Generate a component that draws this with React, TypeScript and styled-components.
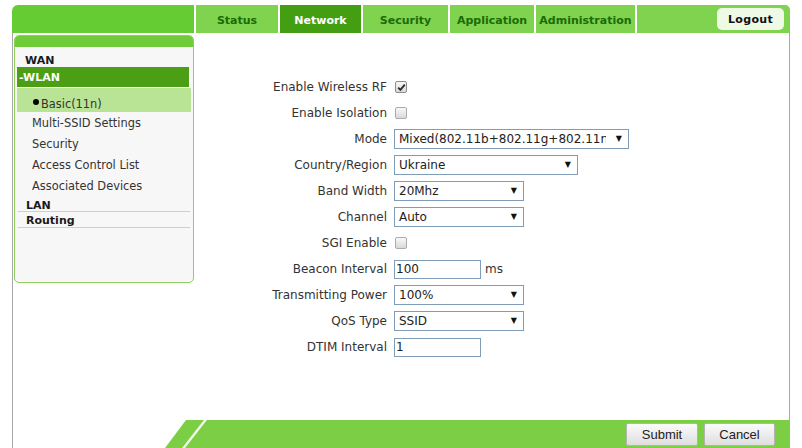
import React from 'react';
import styled, { createGlobalStyle } from 'styled-components';

const GlobalStyle = createGlobalStyle`
  html, body {
    margin: 0;
    padding: 0;
    background: #fff;
    font-family: 'DejaVu Sans', Verdana, sans-serif;
  }
  * {
    box-sizing: border-box;
  }
`;

const Page = styled.div`
  width: 778px;
  margin-left: 12px;
  padding-top: 5px;
`;

const Header = styled.div`
  display: flex;
  gap: 2px;
  height: 28px;
`;

const HeaderLead = styled.div`
  width: 182px;
  background: #66cc33;
  border-top-left-radius: 6px;
`;

const Tab = styled.div<{ $w: number; $active?: boolean }>`
  width: ${(p) => p.$w}px;
  display: flex;
  align-items: center;
  justify-content: center;
  padding-top: 2px;
  background: ${(p) => (p.$active ? '#449e12' : '#7fd34e')};
  color: ${(p) => (p.$active ? '#fff' : '#1c6a06')};
  font-size: 11px;
  font-weight: bold;
`;

const HeaderTail = styled.div`
  flex: 1;
  display: flex;
  align-items: center;
  justify-content: flex-end;
  padding-right: 6px;
  background: #7fd34e;
  border-top-right-radius: 5px;
`;

const LogoutButton = styled.div`
  width: 67px;
  height: 22px;
  display: flex;
  align-items: center;
  justify-content: center;
  background: #eef9e6;
  border-radius: 5px;
  font-size: 11px;
  font-weight: bold;
  color: #111;
  letter-spacing: 0.3px;
`;

const Panel = styled.div`
  height: 415px;
  display: flex;
  flex-direction: column;
  border-left: 1px solid #a9a9a9;
  border-right: 1px solid #a9a9a9;
`;

const Main = styled.div`
  flex: 1;
  display: flex;
  padding: 2px 0 0 1px;
`;

const Sidebar = styled.div`
  width: 180px;
  height: 248px;
  background: #f7f7f7;
  border: 1px solid #8ed05e;
  border-radius: 5px;
  overflow: hidden;
`;

const SidebarCap = styled.div`
  height: 11px;
  background: #6fcc38;
`;

const NavList = styled.div`
  display: flex;
  flex-direction: column;
  padding: 0 2px;
`;

const NavGroup = styled.div<{ $h: number; $line?: boolean; $pt?: number }>`
  height: ${(p) => p.$h}px;
  padding: ${(p) => p.$pt ?? 0}px 0 0 8px;
  margin: 0 ${(p) => (p.$line ? 1 : 0)}px;
  font-size: 11px;
  font-weight: bold;
  color: #1a1a1a;
  line-height: 15px;
  border-bottom: ${(p) => (p.$line ? '1px solid #cfcfcf' : 'none')};
`;

const NavOpen = styled.div`
  height: 20px;
  display: flex;
  align-items: center;
  padding-left: 2px;
  margin-right: 2px;
  background: #4c9e14;
  color: #fff;
  font-size: 11px;
  font-weight: bold;
`;

const NavItem = styled.div<{ $current?: boolean }>`
  height: ${(p) => (p.$current ? 24 : 21)}px;
  display: flex;
  align-items: center;
  padding: ${(p) => (p.$current ? '8px 0 0 16px' : '0 0 0 15px')};
  margin-top: ${(p) => (p.$current ? 1 : 0)}px;
  background: ${(p) => (p.$current ? '#b9e496' : 'transparent')};
  color: #333;
  font-size: 11.4px;
`;

const Bullet = styled.span`
  display: inline-block;
  width: 6px;
  height: 6px;
  margin: 0 2px 4px 0;
  border-radius: 50%;
  background: #000;
`;

const Form = styled.div`
  flex: 1;
  padding-top: 39px;
  display: grid;
  grid-template-columns: 193px 1fr;
  grid-auto-rows: 26px;
  column-gap: 7px;
  align-items: center;
  align-content: start;
`;

const Label = styled.div`
  text-align: right;
  font-size: 12px;
  color: #333;
`;

const Field = styled.div`
  display: flex;
  align-items: center;
  gap: 4px;
  font-size: 12px;
  color: #333;
`;

const Check = styled.span<{ $on?: boolean }>`
  width: 12px;
  height: 12px;
  margin-left: 1px;
  display: inline-flex;
  align-items: center;
  justify-content: center;
  border: 1px solid ${(p) => (p.$on ? '#8c8c8c' : '#ababab')};
  border-radius: 2px;
  background: linear-gradient(#f8f8f8, #d9d9d9);
`;

const SelectWrap = styled.div<{ $w: number }>`
  position: relative;
  width: ${(p) => p.$w}px;
  height: 20px;
  &::after {
    content: '▼';
    position: absolute;
    right: 7px;
    top: 5px;
    font-size: 8px;
    color: #111;
    pointer-events: none;
  }
`;

const Select = styled.select`
  appearance: none;
  width: 100%;
  height: 100%;
  margin: 0;
  padding: 0 22px 0 4px;
  border: 1px solid #7f9db9;
  border-radius: 0;
  background: #fff;
  font-family: 'DejaVu Sans', Verdana, sans-serif;
  font-size: 12px;
  color: #222;
  outline: none;
`;

const TextInput = styled.input`
  width: 87px;
  height: 19px;
  margin: 0;
  padding: 0 1px;
  border: 1px solid #7f9db9;
  font-family: 'DejaVu Sans', Verdana, sans-serif;
  font-size: 12px;
  color: #222;
  outline: none;
`;

const Footer = styled.div`
  position: relative;
  height: 28px;
  margin-left: 152px;
  display: flex;
  align-items: center;
  justify-content: flex-end;
  gap: 6px;
  padding-right: 14px;
  background: #7ccf45;
  clip-path: polygon(0 100%, 21px 0, 100% 0, 100% 100%);
  &::before {
    content: '';
    position: absolute;
    top: 0;
    bottom: 0;
    left: 28px;
    width: 3px;
    background: #f2fbe9;
    transform: skewX(-38deg);
  }
`;

const Button = styled.button<{ $w: number }>`
  width: ${(p) => p.$w}px;
  height: 23px;
  border: 1px solid #b3b3b3;
  border-radius: 2px;
  background: linear-gradient(#fbfbfb, #dedede);
  font-family: 'Liberation Sans', Arial, sans-serif;
  font-size: 13px;
  color: #222;
  padding: 0;
`;

const tabs = [
  { name: 'Status', w: 82 },
  { name: 'Network', w: 81, active: true },
  { name: 'Security', w: 85 },
  { name: 'Application', w: 84 },
  { name: 'Administration', w: 99 },
];

const wlanItems = ['Multi-SSID Settings', 'Security', 'Access Control List', 'Associated Devices'];

function CheckBox({ on }: { on?: boolean }) {
  return (
    <Check $on={on}>
      {on && (
        <svg width="9" height="9" viewBox="0 0 9 9">
          <path d="M1.2 4.6 L3.4 6.9 L7.8 1.6" fill="none" stroke="#2b2b2b" strokeWidth="1.8" />
        </svg>
      )}
    </Check>
  );
}

function Dropdown({ w, value }: { w: number; value: string }) {
  return (
    <SelectWrap $w={w}>
      <Select defaultValue={value}>
        <option>{value}</option>
      </Select>
    </SelectWrap>
  );
}

export default function App() {
  return (
    <>
      <GlobalStyle />
      <Page>
        <Header>
          <HeaderLead />
          {tabs.map((t) => (
            <Tab key={t.name} $w={t.w} $active={t.active}>
              {t.name}
            </Tab>
          ))}
          <HeaderTail>
            <LogoutButton>Logout</LogoutButton>
          </HeaderTail>
        </Header>
        <Panel>
          <Main>
            <Sidebar>
              <SidebarCap />
              <NavList>
                <NavGroup $h={20} $pt={6}>WAN</NavGroup>
                <NavOpen>-WLAN</NavOpen>
                <NavItem $current>
                  <Bullet />
                  Basic(11n)
                </NavItem>
                {wlanItems.map((item) => (
                  <NavItem key={item}>{item}</NavItem>
                ))}
                <NavGroup $h={16} $pt={2} $line>LAN</NavGroup>
                <NavGroup $h={16} $pt={1} $line>Routing</NavGroup>
              </NavList>
            </Sidebar>
            <Form>
              <Label>Enable Wireless RF</Label>
              <Field><CheckBox on /></Field>
              <Label>Enable Isolation</Label>
              <Field><CheckBox /></Field>
              <Label>Mode</Label>
              <Field><Dropdown w={235} value="Mixed(802.11b+802.11g+802.11n)" /></Field>
              <Label>Country/Region</Label>
              <Field><Dropdown w={184} value="Ukraine" /></Field>
              <Label>Band Width</Label>
              <Field><Dropdown w={130} value="20Mhz" /></Field>
              <Label>Channel</Label>
              <Field><Dropdown w={130} value="Auto" /></Field>
              <Label>SGI Enable</Label>
              <Field><CheckBox /></Field>
              <Label>Beacon Interval</Label>
              <Field>
                <TextInput defaultValue="100" />
                ms
              </Field>
              <Label>Transmitting Power</Label>
              <Field><Dropdown w={130} value="100%" /></Field>
              <Label>QoS Type</Label>
              <Field><Dropdown w={130} value="SSID" /></Field>
              <Label>DTIM Interval</Label>
              <Field><TextInput defaultValue="1" /></Field>
            </Form>
          </Main>
          <Footer>
            <Button $w={72}>Submit</Button>
            <Button $w={71}>Cancel</Button>
          </Footer>
        </Panel>
      </Page>
    </>
  );
}
